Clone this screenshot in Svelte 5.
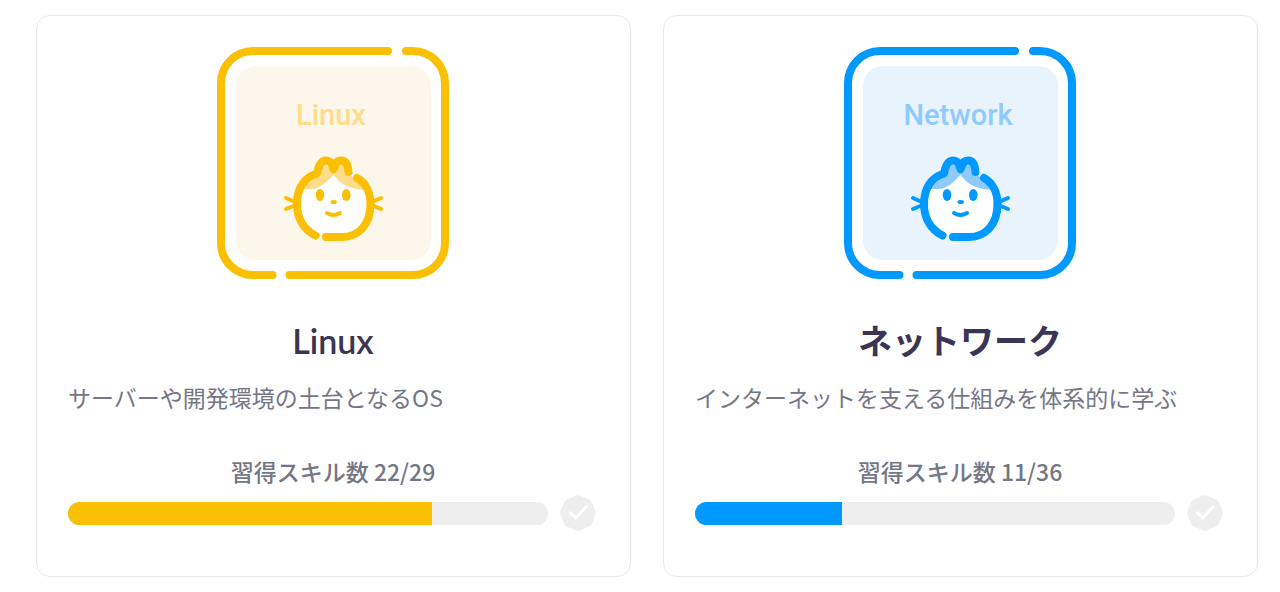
<script>
  const courses = [
    {
      id: 'linux',
      badge: 'Linux',
      title: 'Linux',
      description: 'サーバーや開発環境の土台となるOS',
      done: 22,
      total: 29,
      tone: 'amber'
    },
    {
      id: 'network',
      badge: 'Network',
      title: 'ネットワーク',
      description: 'インターネットを支える仕組みを体系的に学ぶ',
      done: 11,
      total: 36,
      tone: 'blue'
    }
  ];
</script>

<main class="courses">
  {#each courses as course (course.id)}
    <article class="card {course.tone}">
      <svg class="emblem" viewBox="0 0 232 232" aria-hidden="true">
        <rect class="panel" x="19" y="19" width="195" height="194" rx="20" />
        <g class="frame">
          <path d="M171 4H36A32 32 0 0 0 4 36V196A32 32 0 0 0 36 228H55.5" />
          <path d="M189 4H196A32 32 0 0 1 228 36V196A32 32 0 0 1 196 228H72.5" />
        </g>
        <text class="label" x="114" y="78" text-anchor="middle">{course.badge}</text>
        <path class="face" d="M99 188C86 182 80 170 80 157C80 142 88 131 100 127L106 114L116 120L127 114L132 127L140 131C149 136 154 146 154 157C154 178 142 190 125 190Z" />
        <path class="hair" d="M84 142C89 134 96 129 101 127L107 115L117 127C110 135 103 142 94 142Z" />
        <path class="hair" d="M116 127L126 115L132 128L142 132L150 143C135 143 123 138 116 127Z" />
        <path class="tuft" d="M109 114L113 124Q116.500 129 120 124L125 114L117 114Z" />
        <g class="outline">
          <path d="M98.500 188.500C86 182 80 170 80 157C80 142 87 130 100 126.500C101 120 104 113.500 108.500 113.500C112.500 113.500 115 116 116.500 120C118 116 120.500 113.500 124.500 113.500C129 113.500 131 119 131.500 125" />
          <path d="M140 131C149 136 153.500 146 153.500 157C153.500 177 142 190 125 190H109" />
        </g>
        <path class="whiskers" d="M69 151L78 155M69 162L81 157M164 151L155 155M164 162L152 157" />
        <ellipse class="ink" cx="103" cy="148" rx="4.300" ry="6" />
        <ellipse class="ink" cx="129.300" cy="148" rx="4.300" ry="6" />
        <ellipse class="ink" cx="116.700" cy="155" rx="3.200" ry="2" />
        <path class="mouth" d="M110 166Q116.500 170 123 166" />
      </svg>
      <h2>{course.title}</h2>
      <p class="description">{course.description}</p>
      <p class="count" id="{course.id}-count">習得スキル数 {course.done}/{course.total}</p>
      <div class="progress">
        <div
          class="track"
          role="progressbar"
          aria-labelledby="{course.id}-count"
          aria-valuemin="0"
          aria-valuemax={course.total}
          aria-valuenow={course.done}
        >
          <div class="fill" style="width: {(course.done / course.total) * 100}%"></div>
        </div>
        <svg class="check" viewBox="1 1 18 18" aria-hidden="true">
          <circle class="seal" cx="10" cy="10" r="7.600" />
          <path class="seal" d="M6.267 3.455a3.066 3.066 0 001.745-.723 3.066 3.066 0 013.976 0 3.066 3.066 0 001.745.723 3.066 3.066 0 012.812 2.812c.051.643.304 1.254.723 1.745a3.066 3.066 0 010 3.976 3.066 3.066 0 00-.723 1.745 3.066 3.066 0 01-2.812 2.812 3.066 3.066 0 00-1.745.723 3.066 3.066 0 01-3.976 0 3.066 3.066 0 00-1.745-.723 3.066 3.066 0 01-2.812-2.812 3.066 3.066 0 00-.723-1.745 3.066 3.066 0 010-3.976 3.066 3.066 0 00.723-1.745 3.066 3.066 0 012.812-2.812z" />
          <path class="tick" d="M6.200 9.500L9 12.200L14 6.900" />
        </svg>
      </div>
    </article>
  {/each}
</main>

<style>
  :global(body) {
    margin: 0;
    background: #fff;
  }

  .courses {
    display: grid;
    grid-template-columns: repeat(2, minmax(0, 1fr));
    gap: 32px;
    padding: 15px 22px 15px 36px;
    font-family: "Noto Sans CJK JP", sans-serif;
    color: #757786;
  }

  .card {
    display: flex;
    flex-direction: column;
    box-sizing: border-box;
    padding: 31px 32px 43px 31px;
    border: 1px solid #e8e8ec;
    border-radius: 14px;
    background: #fff;
  }

  .amber {
    --main: #fbbf03;
    --soft: #fddc8c;
    --pale: #fdf6ea;
  }

  .blue {
    --main: #0099ff;
    --soft: #8fcaff;
    --pale: #e9f3fc;
  }

  .emblem {
    align-self: center;
    width: 232px;
    height: 232px;
  }

  .panel {
    fill: var(--pale);
  }

  .frame,
  .outline {
    fill: none;
    stroke: var(--main);
    stroke-width: 8;
    stroke-linecap: round;
    stroke-linejoin: round;
  }

  .label {
    fill: var(--soft);
    font-family: Roboto, sans-serif;
    font-size: 29px;
    font-weight: 500;
  }

  .face {
    fill: #fff;
  }

  .hair {
    fill: var(--soft);
  }

  .tuft,
  .ink {
    fill: var(--main);
  }

  .whiskers,
  .mouth {
    fill: none;
    stroke: var(--main);
    stroke-width: 4;
    stroke-linecap: round;
  }

  h2 {
    margin: 38px 0 0;
    color: #3a3555;
    font-family: Lato, "Noto Sans CJK JP", sans-serif;
    font-size: 34px;
    font-weight: 600;
    line-height: 48px;
    text-align: center;
  }

  p {
    margin: 0;
    font-size: 23px;
    line-height: 36px;
  }

  .description {
    margin-top: 14px;
  }

  .count {
    margin-top: 38px;
    font-weight: 500;
    text-align: center;
  }

  .progress {
    display: flex;
    align-items: center;
    gap: 10px;
    margin-top: 4px;
  }

  .track {
    flex: 1;
    height: 23px;
    overflow: hidden;
    border-radius: 12px;
    background: #eee;
  }

  .fill {
    height: 100%;
    background: var(--main);
  }

  .check {
    flex: none;
    width: 40px;
    height: 40px;
  }

  .seal {
    fill: #eee;
  }

  .tick {
    fill: none;
    stroke: #fff;
    stroke-width: 1.300;
  }
</style>
